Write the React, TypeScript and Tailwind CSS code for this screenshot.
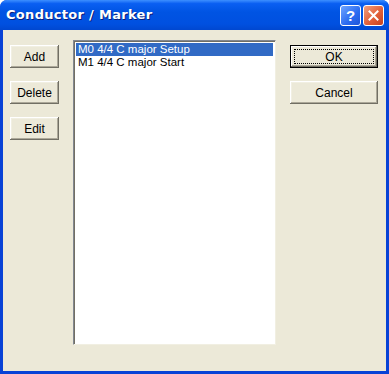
import React from "react";

function XPButton({ label, isDefault, className }: { label: string; isDefault?: boolean; className?: string }) {
  return (
    <div
      className={
        "relative flex items-center justify-center h-[23px] bg-[#ECE9D8] text-[12px] text-black " +
        (isDefault
          ? "border border-black shadow-[inset_-1px_-1px_0_#716F64,inset_1px_1px_0_#FFFFFF,inset_-2px_-2px_0_#ACA899]"
          : "shadow-[inset_-1px_-1px_0_#716F64,inset_1px_1px_0_#FFFFFF,inset_-2px_-2px_0_#ACA899,inset_2px_2px_0_#F1EFE2]") +
        " " +
        (className ?? "")
      }
      style={{ fontFamily: "'Liberation Sans', Arial, sans-serif" }}
    >
      {isDefault && <div className="absolute inset-[3px] border border-dotted border-black" />}
      <span className="relative">{label}</span>
    </div>
  );
}

export default function App() {
  return (
    <div className="w-[389px] h-[374px] flex flex-col bg-[#0842D6] rounded-t-[7px] overflow-hidden">
      <div className="h-[30px] flex items-center px-[6px] bg-[linear-gradient(to_bottom,#3D8FFF_0%,#0A5FF2_12%,#0054E3_40%,#0050E0_80%,#0047D0_100%)]">
        <span
          className="text-white font-bold text-[13px] tracking-[0.3px] [text-shadow:1px_1px_0_#0A1F7A] flex-1"
          style={{ fontFamily: "'DejaVu Sans', Verdana, sans-serif" }}
        >
          Conductor / Marker
        </span>
        <div className="flex gap-[2px] mr-[-1px]">
          <div className="w-[21px] h-[21px] rounded-[3px] border border-white bg-[linear-gradient(135deg,#6EA5FF,#2A6BF0_60%,#1F55D8)] flex items-center justify-center">
            <span className="text-white font-bold text-[15px] leading-none" style={{ fontFamily: "'Liberation Sans', Arial, sans-serif" }}>?</span>
          </div>
          <div className="w-[21px] h-[21px] rounded-[3px] border border-white bg-[linear-gradient(135deg,#F0A080,#E2603A_55%,#C5401E)] flex items-center justify-center">
            <svg width="11" height="11" viewBox="0 0 11 11">
              <path d="M1.5 1.5 L9.5 9.5 M9.5 1.5 L1.5 9.5" stroke="white" strokeWidth="2" strokeLinecap="square" />
            </svg>
          </div>
        </div>
      </div>
      <div className="flex-1 mx-[3px] mb-[3px] bg-[#ECE9D8] flex pt-[10px] pl-[7px]">
        <div className="flex flex-col gap-[13px] pt-[5px] w-[49px]">
          <XPButton label="Add" />
          <XPButton label="Delete" />
          <XPButton label="Edit" />
        </div>
        <div className="ml-[14px] w-[203px] h-[305px] bg-white border border-[#7F9DB9] shadow-[inset_1px_1px_0_#716F64] p-[2px] border-t-[#828790] border-l-[#828790] border-r-[#F1EFE2] border-b-[#F1EFE2]">
          <div
            className="text-[11.5px] leading-[13px]"
            style={{ fontFamily: "'Liberation Sans', Arial, sans-serif" }}
          >
            <div className="bg-[#316AC5] text-white pl-[2px]">M0 4/4 C major Setup</div>
            <div className="text-black pl-[2px]">M1 4/4 C major Start</div>
          </div>
        </div>
        <div className="ml-[14px] flex flex-col gap-[13px] pt-[5px] w-[88px]">
          <XPButton label="OK" isDefault />
          <XPButton label="Cancel" />
        </div>
      </div>
    </div>
  );
}
